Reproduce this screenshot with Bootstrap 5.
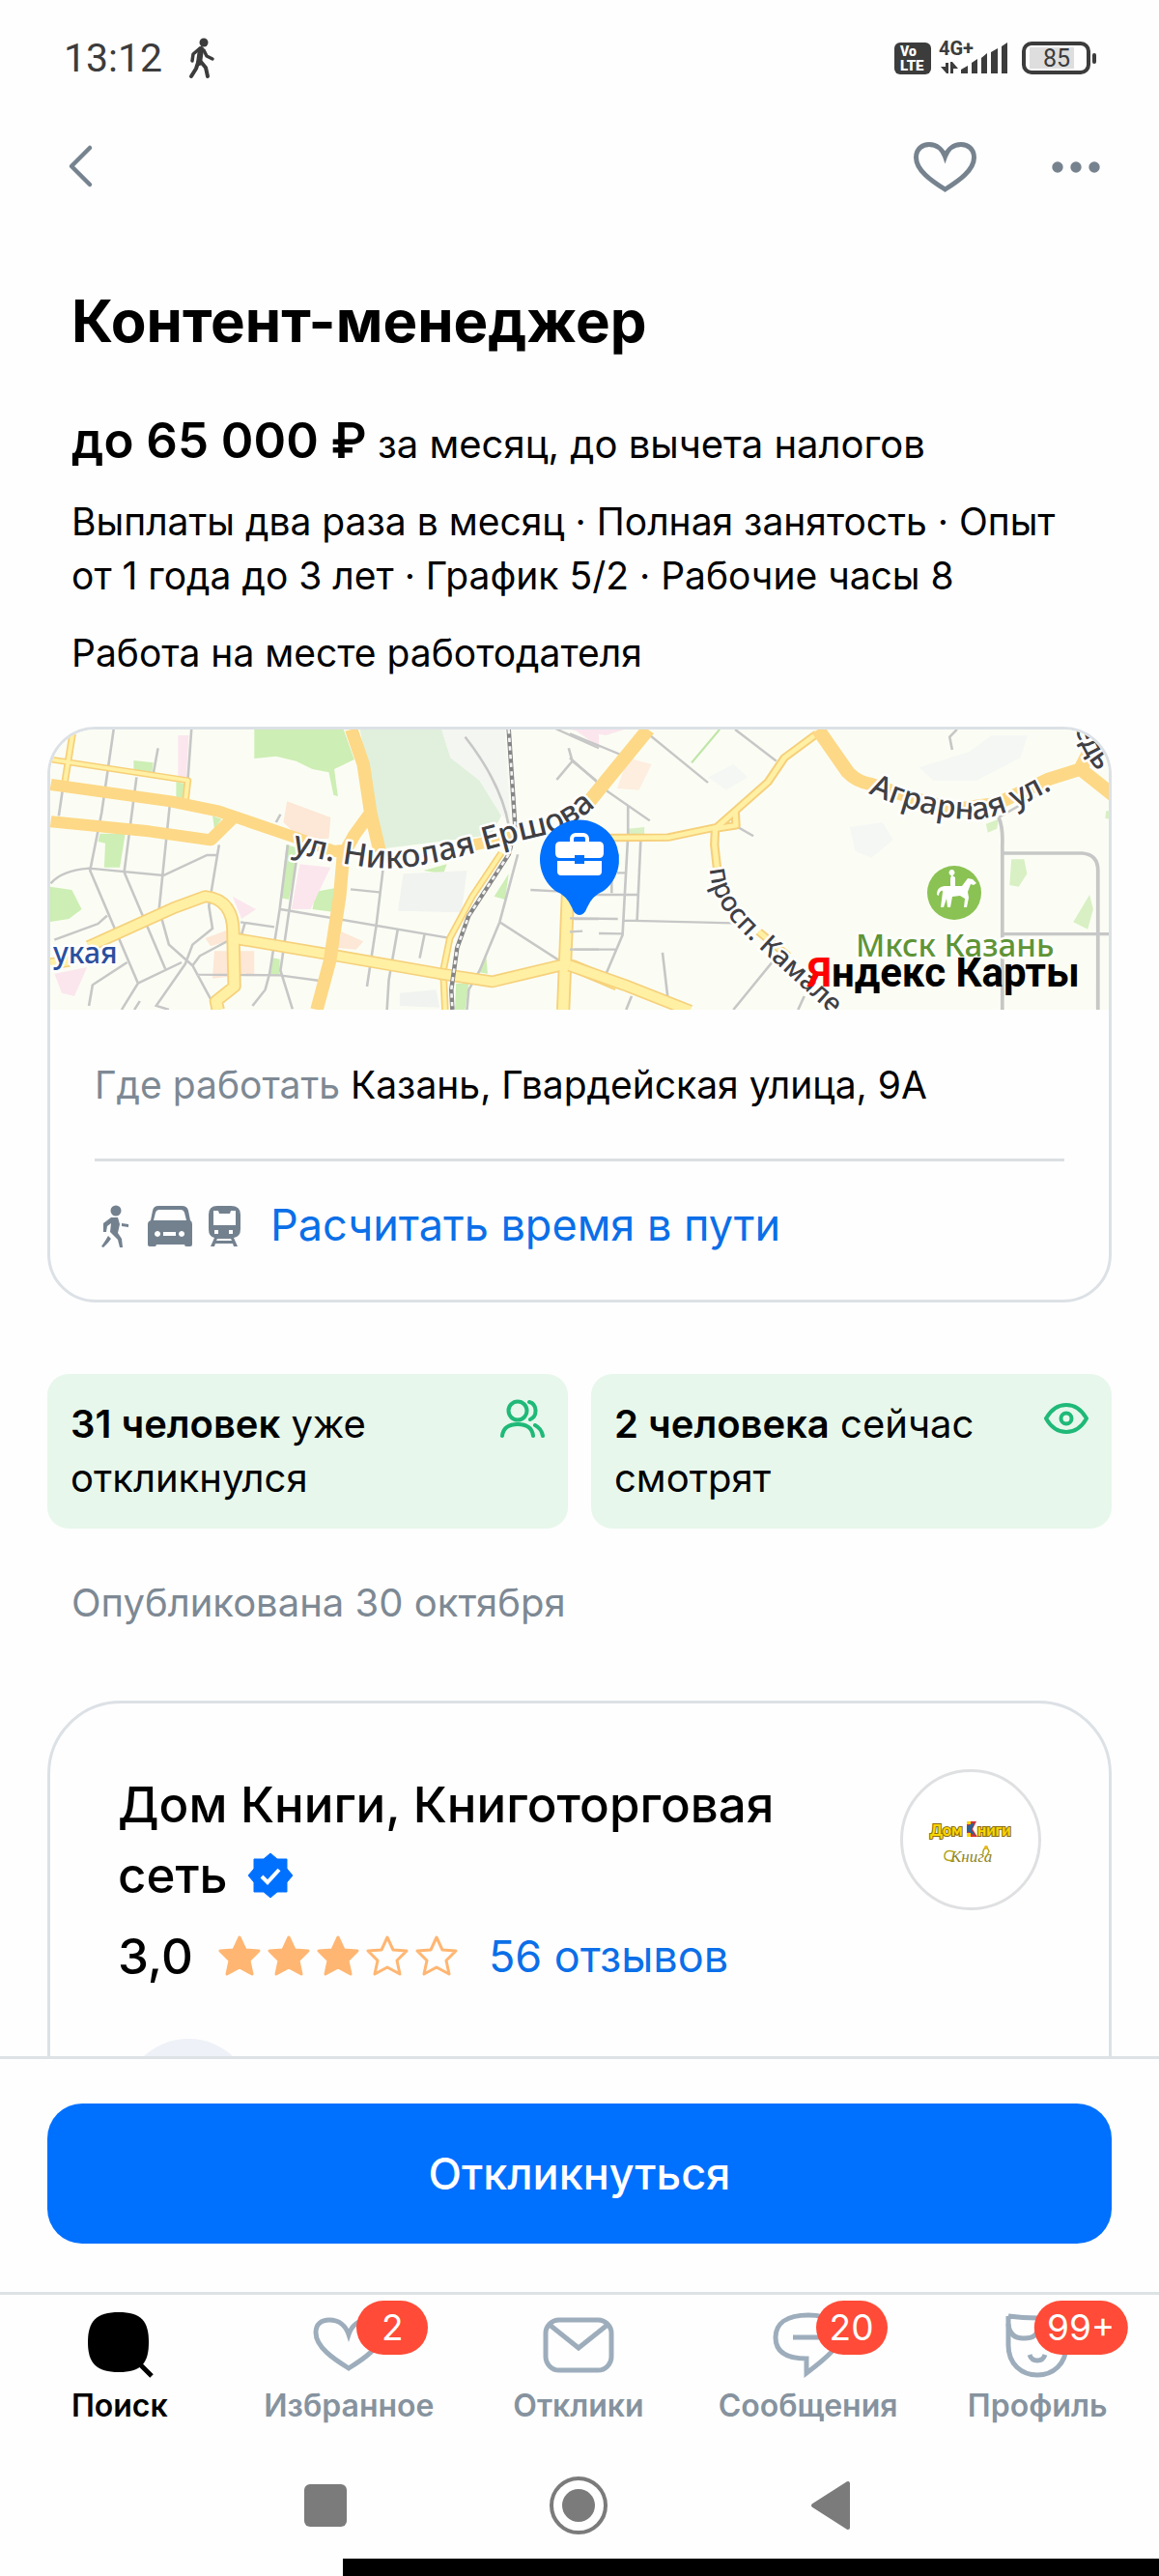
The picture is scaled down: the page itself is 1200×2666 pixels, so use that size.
<!DOCTYPE html>
<html lang="ru">
<head>
<meta charset="utf-8">
<meta name="viewport" content="width=device-width, initial-scale=1">
<title>Контент-менеджер</title>
<link href="https://cdn.jsdelivr.net/npm/bootstrap@5.3.0/dist/css/bootstrap.min.css" rel="stylesheet">
<style>
  body { font-family: Inter, "Liberation Sans", sans-serif; font-size: 40px; line-height: 56px; color: #000; background: #fefefe; }
  a { text-decoration: none; color: #0b6fe8; }
  svg { display: block; flex: none; }
  .status-bar { padding: 32px 60px 24px 66px; color: #3c3c3c; font-family: Roboto, sans-serif; font-size: 41px; }
  .app-bar { height: 120px; padding: 0 54px 0 56px; color: #76838f; }
  .app-actions { gap: 66px; }
  .icon-btn { border: 0; background: none; padding: 0; color: inherit; }
  .page { padding: 64px 49px 0; min-height: 0; }
  .intro { padding: 0 25px; }
  .job-title { font-size: 60px; line-height: 72px; font-weight: 700; margin-bottom: 60px; }
  .salary { line-height: 64px; margin-bottom: 20px; }
  .salary strong { font-size: 51px; line-height: 50px; font-weight: 600; }
  .detail-text { font-size: 39px; }
  .facts { margin-bottom: 24px; }
  .panel { border: 3px solid #dce1e6; background: #fefefe; overflow: hidden; }
  .place { border-radius: 50px; margin-top: 48px; }
  .map-view { width: 100%; height: 290px; }
  .place-body { padding: 50px 46px 45px; }
  .rule { height: 3px; background: #dcdfe1; margin: 48px 0 34px; }
  .route { font-size: 45px; line-height: 64px; }
  .muted-text { color: #7d8994; }
  .stats { gap: 24px; margin-top: 74px; }
  .stat { flex: 1 1 0; background: #e7f7eb; border-radius: 22px; padding: 24px; color: #000; }
  .strong-text { font-weight: 600; }
  .published { padding: 0 25px; margin: 49px 0 73px; }
  .employer { border-radius: 76px; padding: 68px 70px; }
  .employer-name { font-size: 51px; line-height: 73px; font-weight: 500; margin: 0; max-width: 740px; }
  .rating { font-size: 51px; line-height: 64px; font-weight: 500; margin-top: 16px; gap: 25px; }
  .rating a { font-size: 45px; font-weight: 400; }
  .blob { width: 136px; height: 136px; border-radius: 50%; background: #eef1f7; margin: 53px 0 0 5px; }
  .cta { border-top: 3px solid #dde2e5; padding: 46px 49px 50px; background: #fefefe; }
  .cta .btn { background: #0070ff; border: 0; border-radius: 36px; padding: 40px; font-size: 45px; line-height: 65px; font-weight: 500; color: #fff; }
  .tabs { border-top: 3px solid #dde2e5; padding: 14px 7px 20px 5px; background: #fefefe; }
  .tab { flex: 1 1 0; font-size: 32px; line-height: 40px; font-weight: 600; color: #86939f; }
  .tab svg { color: #9dadbc; margin-bottom: 5px; }
  .tab.current, .tab.current svg { color: #000; }
  .counter { position: absolute; top: -8px; left: calc(50% + 45px); transform: translateX(-50%); min-width: 74px; height: 56px; border-radius: 28px; padding: 0 13px; background: #ff4b37; color: #fff; font-size: 37px; line-height: 56px; font-weight: 400; text-align: center; }
  .sys-nav { padding: 32px 4px 24px 0; color: #7b7b7b; }
  .black-strip { height: 18px; background: #000; margin-left: 29.6%; }
  .map-label { font-family: "Noto Sans", "Open Sans", sans-serif; font-weight: 500; paint-order: stroke; stroke: #fff; stroke-width: 5px; stroke-linejoin: round; }
</style>
<script src="https://cdn.jsdelivr.net/npm/bootstrap@5.3.0/dist/js/bootstrap.bundle.min.js"></script>
</head>
<body class="d-flex flex-column vh-100 overflow-hidden">

<header>
  <div class="status-bar d-flex align-items-center justify-content-between">
    <div class="d-flex align-items-center gap-4">
      <span>13:12</span>
      <svg width="34" height="44" viewBox="0 0 34 44" fill="none" stroke="currentColor" stroke-linecap="round" stroke-linejoin="round">
        <circle cx="19" cy="6" r="4.5" fill="currentColor" stroke="none"/>
        <path d="M16 13 L14 27" stroke-width="6"/>
        <path d="M15 12 L8 18 L7 25" stroke-width="3.5"/>
        <path d="M19 14 L22 20 L28 23" stroke-width="3.5"/>
        <path d="M13 27 L11 33 L6 41 M16 26 L21 32 L23 41" stroke-width="4"/>
      </svg>
    </div>
    <svg width="216" height="40" viewBox="924 40 216 40" font-family="Roboto, sans-serif">
      <rect x="926" y="44" width="38" height="33" rx="6" fill="#3c3c3c"/>
      <text x="932" y="58" font-size="14" font-weight="900" fill="#fff">Vo</text>
      <text x="932" y="73" font-size="15" font-weight="900" fill="#fff">LTE</text>
      <text x="972" y="57" font-size="20" font-weight="700" fill="#3c3c3c">4G+</text>
      <g fill="#3c3c3c">
        <path d="M979 65h3v11h-2l-6-7h5zM984 76V64h2l6 7h-5v5z"/>
        <path d="M995 76v-4l7-4v8zM1006 76V65l6-4v15zM1016 76V60l6-5v21zM1026 76V54l7-4v26zM1037 76V48l6-4v32z"/>
      </g>
      <rect x="1060" y="45" width="67" height="30" rx="8" fill="none" stroke="#3c3c3c" stroke-width="4"/>
      <rect x="1066" y="49" width="46" height="22" fill="#dedede"/>
      <rect x="1131" y="55" width="4" height="11" rx="2" fill="#3c3c3c"/>
      <text x="1080" y="69" font-size="25" fill="#3c3c3c">85</text>
    </svg>
  </div>
  <nav class="app-bar d-flex align-items-center justify-content-between">
    <button class="icon-btn" type="button" aria-label="Назад">
      <svg width="50" height="50" viewBox="0 0 50 50" fill="none" stroke="currentColor" stroke-width="4.5" stroke-linecap="round" stroke-linejoin="round"><path d="M37 6 L18 25 L37 44"/></svg>
    </button>
    <div class="app-actions d-flex align-items-center">
      <button class="icon-btn" type="button" aria-label="В избранное">
        <svg width="74" height="60" viewBox="0 0 74 60" fill="none" stroke="currentColor" stroke-width="5"><path d="M36.500 54 C22 45 6.500 34 6.500 21 C6.500 12 13 7.500 20 7.500 C28 7.500 34 13 36.500 20 C39 13 45 7.500 53 7.500 C60 7.500 66.500 12 66.500 21 C66.500 34 51 45 36.500 54Z"/></svg>
      </button>
      <button class="icon-btn" type="button" aria-label="Ещё">
        <svg width="64" height="50" viewBox="0 0 64 50" fill="currentColor"><circle cx="13" cy="26" r="5.700"/><circle cx="32" cy="26" r="5.700"/><circle cx="51" cy="26" r="5.700"/></svg>
      </button>
    </div>
  </nav>
</header>

<main class="page flex-grow-1 overflow-hidden">
  <section class="intro">
    <h1 class="job-title">Контент-менеджер</h1>
    <p class="salary"><strong>до 65 000 ₽</strong> за месяц, до вычета налогов</p>
    <p class="facts detail-text">Выплаты два раза в месяц · Полная занятость · Опыт от 1 года до 3 лет · График 5/2 · Рабочие часы 8</p>
    <p class="mb-0 detail-text">Работа на месте работодателя</p>
  </section>

  <section class="panel place">
    <svg class="map-view" viewBox="52 754 1096 290" preserveAspectRatio="xMidYMid slice" role="img" aria-label="Карта">
      <rect x="-500" y="700" width="2400" height="400" fill="#fbfdf4"/>
      <!-- western half -->
      <g transform="translate(30 740) scale(.3763 .3333)">
        <g fill="#cdeeb4">
          <path d="M620 40 L865 40 L895 135 L840 165 L850 250 L838 245 L825 175 L780 165 L735 140 L680 125 L620 132Z"/>
          <path d="M288 138 L342 145 L338 180 L288 168ZM195 365 L265 365 L250 470 L207 470 L210 395 L190 390ZM55 530 L118 540 L145 600 L110 630 L55 640ZM505 310 L530 320 L510 350ZM405 205 L428 210 L422 255 L405 252ZM708 400 L742 410 L715 570 L693 565ZM790 545 L840 535 L835 608 L780 600ZM1285 95 L1318 180 L1285 140ZM1280 560 L1320 490 L1310 570ZM668 750 L690 755 L690 805 L662 800ZM1175 830 L1210 830 L1200 912 L1172 912ZM1235 795 L1258 745 L1262 800ZM1085 480 L1150 460 L1140 490Z"/>
        </g>
        <path d="M910 40 L1135 40 L1160 130 L1240 200 L1300 310 L1270 370 L975 412 L955 290Z" fill="#e0f0dc"/>
        <path d="M1160 130 L1135 40 L1310 40 L1325 340 L1290 290 L1240 200Z" fill="#f4f6f1"/>
        <g fill="#fde7d6"><path d="M710 265 L830 315 L825 380 L750 385 L700 330ZM485 690 L545 665 L545 700 L500 715ZM510 730 L620 730 L620 800 L505 815ZM860 670 L920 700 L900 725 L850 720Z"/></g>
        <g fill="#fbe6ee"><path d="M745 460 L830 470 L800 540 L775 600 L722 600ZM70 800 L160 780 L125 870 L90 860ZM560 560 L625 600 L585 630ZM410 60 L440 60 L432 200 L410 200ZM1500 42 L1568 42 L1568 95Z"/></g>
        <path d="M1030 490 L1205 480 L1190 610 L1015 605ZM1020 860 L1120 850 L1130 905 L1020 900Z" fill="#f1f3f0"/>
        <path fill="none" stroke="#c6c7c6" stroke-width="7" d="M233 42 L200 300 L168 480 L300 830 L255 912 M447 42 L437 200 M355 100 L342 180 M296 190 L262 485 L375 785 M95 210 L82 310 M388 270 L358 600 M60 520 Q90 480 165 473 L370 495 L490 432 L520 432 M523 400 L495 590 L505 660 L450 710 L430 770 L350 900 L385 912 M70 695 L190 645 L215 620 M358 600 L385 710 L450 775 L510 900 M545 700 L470 745 L450 775 M300 830 L420 765 M270 765 L175 835 L165 900 M290 912 L305 885 M712 400 L690 600 L662 800 L650 850 L615 900 M740 415 L692 790 L725 910 M582 640 L675 655 M595 640 L582 690 M692 600 L1150 688 M978 440 L955 655 L930 840 M885 538 L970 548 M1015 660 L990 820 L985 912 M1088 680 L1075 752 M460 803 L690 805 L800 822 M1200 65 Q1300 210 1320 340 M1345 430 L1295 640 L1240 790 L1210 850 L1205 912 M1295 640 L1460 760 M1380 540 L1465 545 M1450 40 L1568 100 M1485 100 L1495 140 L1452 198 M1495 140 L1560 200 M680 330 L692 305 M1500 630 L1568 630 M1500 725 L1568 725"/>
        <g fill="none" stroke-linejoin="round">
          <path d="M120 55 L98 210 M60 135 L437 200 L430 270 M1300 425 L1220 560 L1158 690 L1140 790 L1145 912" stroke="#f7cf78" stroke-width="20"/>
          <path d="M120 55 L98 210 M60 135 L437 200 L430 270 M1300 425 L1220 560 L1158 690 L1140 790 L1145 912" stroke="#fff0a4" stroke-width="11"/>
          <path d="M165 715 L400 595 L485 560 Q565 570 562 680 L565 840 L515 885 L520 912 M562 690 L850 745 L1130 800 L1275 825 L1460 775 L1495 775 L1620 835 M1483 545 L1470 912 M60 770 L110 760" stroke="#f6d17c" stroke-width="38"/>
          <path d="M165 715 L400 595 L485 560 Q565 570 562 680 L565 840 L515 885 L520 912 M562 690 L850 745 L1130 800 L1275 825 L1460 775 L1495 775 L1620 835 M1483 545 L1470 912 M60 770 L110 760" stroke="#fff0a4" stroke-width="28"/>
          <path d="M60 213 L390 265 L520 295 L735 378 L840 420 L880 415 M60 328 L330 358 L500 385 L560 318 M887 42 L920 150 L940 300 L895 370 L865 430 L855 560 L828 760 L792 912 M940 300 L965 420 M1225 400 L1330 375 M1568 230 L1540 270" stroke="#fdd886" stroke-width="36"/>
          <path d="M1320 42 L1338 350 L1320 430 L1210 620 L1178 720 L1162 850 L1165 912" stroke="#858585" stroke-width="12"/>
          <path d="M1320 42 L1338 350 L1320 430 L1210 620 L1178 720 L1162 850 L1165 912" stroke="#f4f4f4" stroke-width="7" stroke-dasharray="13 13"/>
        </g>
      </g>
      <!-- eastern half -->
      <g transform="translate(590 740) scale(.3763 .3333)">
        <path d="M0 42 L150 42 L100 60 L40 50Z" fill="#fbe6ee"/>
        <path d="M160 130 L225 150 L190 230 L130 225Z" fill="#fdeee0"/>
        <g fill="#d8f0c4"><path d="M160 350 L205 345 L205 375 L160 375ZM1145 335 L1180 320 L1175 350 L1150 362ZM1215 445 L1250 445 L1258 490 L1235 530 L1210 525ZM1430 555 L1440 600 L1425 662 L1385 640ZM1475 295 L1485 295 L1485 320 L1473 318Z"/></g>
        <path d="M770 345 L860 330 L890 385 L830 440 L785 420ZM960 160 L1100 110 L1160 60 L1260 60 L1240 130 L1120 200 L1000 200ZM380 190 L450 150 L490 190 L430 230Z" fill="#f5f7f4"/>
        <g fill="none" stroke="#c6c7c6" stroke-width="7">
          <path d="M0 55 L140 120 M215 55 L380 207 M455 42 L568 140 M0 130 L105 235 L220 325 M160 280 L160 370 L145 680 L100 800 M195 385 L185 635 M455 340 L505 373 M1065 42 L1045 65 L1052 105 M1180 315 L1280 250 M60 555 L185 555 M115 490 L115 550 M130 487 L155 487 M150 635 L450 643 M0 628 L132 630 M0 670 L35 668 M80 675 L145 676 M0 725 L125 725 M255 735 L270 880 M560 760 L450 912 M170 870 L155 912 M645 870 L628 912"/>
          <path d="M1180 315 Q1192 345 1190 400 L1190 912 M1193 426 L1410 426 Q1453 430 1453 480 L1453 912 M1195 677 L1485 677" stroke-width="10"/>
        </g>
        <path d="M412 42 L335 145" stroke="#bfe6a8" stroke-width="6"/>
        <g fill="none" stroke-linejoin="round">
          <path d="M680 55 L590 130 L545 205 L460 290 L405 345 L270 377 L110 378 M455 295 L457 340 L400 350 L398 400 L405 470 M520 670 L600 745" stroke="#f6cf7a" stroke-width="25"/>
          <path d="M680 55 L590 130 L545 205 L460 290 L405 345 L270 377 L110 378 M455 295 L457 340 L400 350 L398 400 L405 470 M520 670 L600 745" stroke="#fff0a4" stroke-width="14"/>
          <path d="M0 775 L150 835 L330 915" stroke="#f6d17c" stroke-width="38"/>
          <path d="M0 775 L150 835 L330 915" stroke="#fff0a4" stroke-width="28"/>
          <path d="M215 42 L50 270 M683 42 L765 175 Q790 205 830 212 L960 260 L1060 290 L1180 270 L1320 195 L1405 165 L1430 110 M1405 165 L1500 250" stroke="#fdd886" stroke-width="40"/>
        </g>
      </g>
      <defs>
        <path id="road-a" d="M302 881 C340 890 380 900 418 897 C470 890 520 873 560 864 C590 857 605 845 625 825"/>
        <path id="road-b" d="M899 820 C940 838 980 848 1014 847 C1045 842 1065 828 1105 808"/>
        <path id="road-c" d="M735 898 C737 935 762 958 790 984 L880 1066"/>
        <path id="road-d" d="M1113 752 C1120 775 1130 795 1167 830"/>
      </defs>
      <g class="map-label" font-size="33" fill="#3f4044">
        <text><textPath href="#road-a">ул. Николая Ершова</textPath></text>
        <text font-size="32"><textPath href="#road-b">Аграрная ул.</textPath></text>
        <text font-size="28"><textPath href="#road-c">просп. Камале</textPath></text>
        <text font-size="30"><textPath href="#road-d">едь</textPath></text>
      </g>
      <text class="map-label" x="55" y="996" font-size="30" fill="#2b4f9e">укая</text>
      <circle cx="988" cy="923" r="28" fill="#8ac253"/>
      <path d="M985 905a3 3 0 1 1 1 0l3 2v9h7l6-8 5 1 4 4-3 2-3-1-3 8 1 6-2 10h-3l1-9-5-3-8 1-2 11h-3l-1-9-3 9h-3l2-16c0-3-4 0-4 4l-2-1c0-7 4-9 10-9h4v-8z" fill="#fff"/>
      <text class="map-label" x="886" y="989" font-size="33" fill="#5f9436">Мкск Казань</text>
      <text x="836" y="1020" font-family="Roboto, sans-serif" font-size="42" font-weight="700"><tspan fill="#f00">Я</tspan>ндекс Карты</text>
      <path d="M600 946 Q595 946 592 938 Q587 926 575 921 A41 41 0 1 1 625 921 Q613 926 608 938 Q605 946 600 946Z" fill="#0070ff"/>
      <rect x="592" y="863" width="16" height="12" rx="4" fill="none" stroke="#fff" stroke-width="4"/>
      <path d="M580 870h40q5 0 5 5v7q0 5-5 5h-15v-3h-10v3h-15q-5 0-5-5v-7q0-5 5-5zM577 890h18v3h10v-3h18v11q0 4-4 4h-38q-4 0-4-4z" fill="#fff"/>
    </svg>
    <div class="place-body">
      <p class="mb-0 detail-text"><span class="muted-text">Где работать</span> Казань, Гвардейская улица, 9А</p>
      <div class="rule"></div>
      <a href="#" class="route d-flex align-items-center">
        <svg width="182" height="50" viewBox="99 1242 182 50" fill="#73818f">
          <circle cx="121" cy="1252" r="5.500"/>
          <path d="M116 1259h7l2 7-2 9 4 6 1 9h-3l-2-8-8-8 1-9-4 3-1 6h-3v-9zM127 1265l7 1v3l-7-1zM113 1278l3 3-3 4-5 5-2-1 4-6z"/>
          <path fill-rule="evenodd" d="M165 1247h24q6 0 7 5l2 10q2 1 2 4v21q0 2-2 2h-4q-2 0-2-2h-29q0 2-2 2h-4q-3 0-3-2v-21q0-3 3-4l2-10q1-5 6-5zM166 1251q-3 0-4 3l-2 8h34l-2-8q-1-3-4-3zM170 1274v4h13v-4zM164 1273a3 3 0 1 0 .1 0zM189 1273a3 3 0 1 0 .1 0z"/>
          <path fill-rule="evenodd" d="M226 1247h14q10 0 10 9v15q0 8-7 9l4 9h-4l-1-3h-18l-1 3h-4l4-9q-6-1-6-9v-15q0-9 9-9zM222 1252v15h23v-15h-5l-1 3h-11l-1-3zM223 1272v4h4v-4zM238 1272v4h4v-4zM226 1281l-1 2h16l-1-2z"/>
        </svg>
        <span>Расчитать время в пути</span>
      </a>
    </div>
  </section>

  <section class="stats d-flex">
    <div class="stat d-flex justify-content-between">
      <span><span class="strong-text">31 человек</span> уже<br>откликнулся</span>
      <svg width="46" height="46" viewBox="0 0 46 46" fill="none" stroke="#1fb978" stroke-width="4" stroke-linecap="round"><circle cx="18" cy="14" r="9.500"/><path d="M2 40C3 32 9 28 18 28S33 32 34 40M30 5c8 2 9 14 1 18M36 29c4 2 7 6 8 11"/></svg>
    </div>
    <div class="stat d-flex justify-content-between">
      <span><span class="strong-text">2 человека</span> сейчас<br>смотрят</span>
      <svg width="46" height="46" viewBox="0 0 46 46" fill="none" stroke="#1fb978" stroke-width="4"><path d="M2 22Q10 8 23 8T44 22Q36 36 23 36T2 22Z" stroke-linejoin="round"/><circle cx="23" cy="22" r="5.500"/></svg>
    </div>
  </section>

  <p class="published muted-text">Опубликована 30 октября</p>

  <section class="panel employer">
    <div class="d-flex justify-content-between align-items-start">
      <h2 class="employer-name">Дом Книги, Книготорговая сеть <svg class="d-inline-block align-middle ms-2 mb-2" width="46" height="46" viewBox="0 0 46 46"><path d="M23 0l7 6h10v10l6 7-6 7v10H30l-7 6-7-6H6V30l-6-7 6-7V6h10z" fill="#0070ff" stroke="#0070ff" stroke-linejoin="round"/><path d="M14 24l6 6 12-13" fill="none" stroke="#fff" stroke-width="4"/></svg></h2>
      <svg width="146" height="146" viewBox="0 0 146 146">
        <circle cx="73" cy="73" r="71.500" fill="#fff" stroke="#dfe0e2" stroke-width="3"/>
        <text x="31" y="69" font-family="Lato, sans-serif" font-weight="900" font-size="16" fill="#f9d500" stroke="#8a6d10" stroke-width="2" paint-order="stroke">Дом</text>
        <path d="M69 54h10l-4 8 5 8H69z" fill="#dd2f35"/><path d="M69 59l8-4-3 8 4 6-9-5z" fill="#2a6293"/>
        <path d="M69 54h4v3h-4zM69 66h4v4h-4z" fill="#f9d500"/>
        <text x="80" y="69" font-family="Lato, sans-serif" font-weight="900" font-size="16" fill="#f9d500" stroke="#8a6d10" stroke-width="2" paint-order="stroke">ниги</text>
        <text x="52" y="96" font-family="Liberation Serif, serif" font-style="italic" font-size="17" fill="#8f8424">Книга</text>
        <path d="M57 86q-10-4-11 3t10 5M86 88q-1-6 4-7l2 4-3 6" fill="none" stroke="#b7a41c" stroke-width="1.500"/><circle cx="89" cy="81" r="2" fill="#e8b616"/>
      </svg>
    </div>
    <div class="rating d-flex align-items-center">
      <span>3,0</span>
      <svg width="256" height="46" viewBox="0 0 256 46" stroke="#ffb672" stroke-width="3" stroke-linejoin="round">
        <defs><path id="star" d="M23 3l6 13 14 1-10 10 3 14-13-7-13 7 3-14L3 17l14-1z"/></defs>
        <g fill="#ffb672"><use href="#star"/><use href="#star" x="51"/><use href="#star" x="102"/></g>
        <g fill="none"><use href="#star" x="153"/><use href="#star" x="204"/></g>
      </svg>
      <a href="#">56 отзывов</a>
    </div>
    <div class="blob"></div>
  </section>
</main>

<footer>
  <div class="cta"><button class="btn w-100" type="button">Откликнуться</button></div>
  <nav class="tabs d-flex">
    <a href="#" class="tab current position-relative d-flex flex-column align-items-center">
      <svg width="76" height="76" viewBox="0 0 76 76"><path d="M37 4C60 4 68 13 68 35S60 66 37 66 5 57 5 35 14 4 37 4Z" fill="currentColor"/><path d="M57 56L71 70" stroke="currentColor" stroke-width="5"/></svg>
      <span>Поиск</span>
    </a>
    <a href="#" class="tab position-relative d-flex flex-column align-items-center">
      <svg width="76" height="76" viewBox="0 0 76 76" fill="none" stroke="currentColor" stroke-width="5"><path d="M38 62C22 52 4 40 4 25C4 16 10 12 18 12C28 12 35 18 38 27C41 18 48 12 58 12C66 12 72 16 72 25C72 40 54 52 38 62Z"/></svg>
      <span>Избранное</span><span class="counter">2</span>
    </a>
    <a href="#" class="tab position-relative d-flex flex-column align-items-center">
      <svg width="76" height="76" viewBox="0 0 76 76" fill="none" stroke="currentColor" stroke-width="5"><rect x="4" y="12" width="68" height="52" rx="14"/><path d="M8 17L38 41L68 17"/></svg>
      <span>Отклики</span>
    </a>
    <a href="#" class="tab position-relative d-flex flex-column align-items-center">
      <svg width="76" height="76" viewBox="0 0 76 76" fill="none" stroke="currentColor" stroke-width="5"><path d="M36 52C14 52 4 44 4 30S15 7 38 7 72 16 72 29Q72 40 36 67Z"/><path d="M22 30H54"/></svg>
      <span>Сообщения</span><span class="counter">20</span>
    </a>
    <a href="#" class="tab position-relative d-flex flex-column align-items-center">
      <svg width="76" height="76" viewBox="0 0 76 76" fill="none" stroke="currentColor" stroke-width="5"><path d="M8 8Q38 12 68 8V38C68 58 54 69 38 69S8 58 8 38V8"/><path d="M8 16Q9 31 24 31T38 20Q40 31 54 31T68 16M30 48Q32 54 38 54T46 48"/></svg>
      <span>Профиль</span><span class="counter">99+</span>
    </a>
  </nav>
  <div class="sys-nav">
    <svg class="mx-auto" width="566" height="62" viewBox="315 2562 566 62" fill="currentColor">
      <rect x="315" y="2571" width="44" height="44" rx="6"/>
      <circle cx="599" cy="2593" r="28" fill="none" stroke="currentColor" stroke-width="4"/><circle cx="599" cy="2593" r="17"/>
      <path d="M842 2593L878 2570V2616Z" stroke="currentColor" stroke-width="4" stroke-linejoin="round"/>
    </svg>
  </div>
  <div class="black-strip"></div>
</footer>
</body>
</html>
